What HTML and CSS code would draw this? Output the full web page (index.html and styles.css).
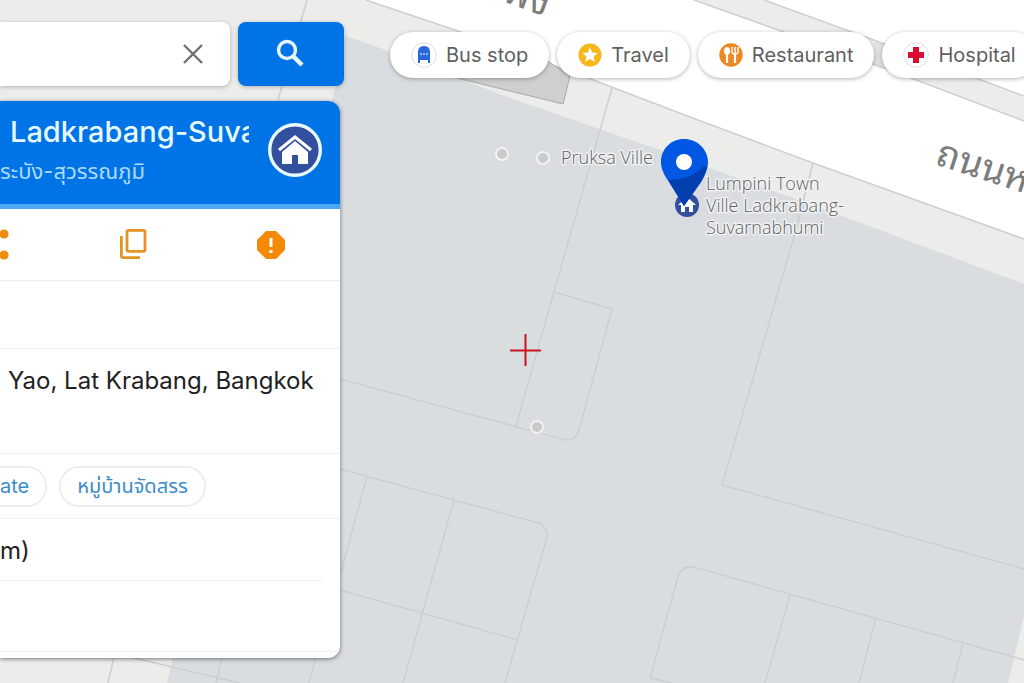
FILE: index.html
```html
<!DOCTYPE html>
<html lang="en">
<head>
    <meta charset="UTF-8">
    <meta name="viewport" content="width=device-width, initial-scale=1.0">
    <title>Map</title>
    <link rel="stylesheet" href="styles.css">
</head>
<body>
    <div class="app">
        <!-- Map canvas -->
        <svg class="map" viewBox="0 0 1024 683" preserveAspectRatio="xMinYMin slice">
            <polygon class="area" points="345,36 380,48 510,98 660,150 845,217 1024,284 1024,616 1008,683 167,683 173,657 333,97"/>
            <polygon class="road" points="366,0 458,31 588,78 690,117 813,163 1024,239 1024,121 882,67 784,32 694,0"/>
            <polygon class="road" points="764,0 882,43 1024,96 1024,0"/>
            <polygon class="strip" points="876,41 887,45 882,69 870,64"/>
            <polyline class="edge" points="366,0 458,31 588,78 690,117 813,163 1024,239"/>
            <polyline class="edge" points="694,0 784,32 882,67 1024,121"/>
            <polyline class="edge" points="764,0 882,43 1024,96"/>
            <polygon class="building" points="457,78 563,104 570,76 540,56 480,45"/>
            <path class="plot" d="M307 0L278 100M612 88L554 292L516 426M554 292L612 309L579 430Q576 441 565 440L340 379M813 163L796 230L722 485L1024 569"/>
            <path class="plot" d="M340 469L542 524L548 534L505 683M367 476L341 572M454 500L403 683M340 590L518 640"/>
            <path class="plot" d="M672 683L650 678L679 573Q684 566 694 567L1024 660M790 595L765 683M876 618L859 683M963 643L953 683"/>
            <path class="plot" d="M114 657L108 683M130 657L240 683M222 657L216 683M316 657L309 683"/>
            <g class="road-name" lang="th">
                <text transform="translate(480 -7) rotate(20)">แพง</text>
                <text transform="translate(934 164) rotate(18)">ถนนห</text>
            </g>
            <g class="dot">
                <circle cx="502" cy="154" r="6"/>
                <circle cx="543" cy="158" r="6"/>
                <circle cx="537" cy="427" r="6"/>
            </g>
            <g class="place">
                <text x="561" y="164">Pruksa Ville</text>
                <text x="706" y="190">Lumpini Town</text>
                <text x="706" y="212">Ville Ladkrabang-</text>
                <text x="706" y="234">Suvarnabhumi</text>
            </g>
            <circle cx="687" cy="205" r="12" fill="#33509f"/>
            <path d="M687 197L678 205H681V212H685V207H689V212H693V205H696Z" fill="#fff"/>
            <path d="M684 139C671 139 661 149 661 162C661 170 665 176 669 182L684 206L701 182C704 177 708 170 708 162C708 149 697 139 684 139Z" fill="#0057e3"/>
            <path d="M668 180Q690 180 704 166L707 167Q704 177 701 182L684 206Z" fill="#003fad"/>
            <circle cx="684" cy="162" r="8" fill="#fff"/>
            <path class="cross" d="M510 350.5H541M525.5 334V366"/>
        </svg>

        <aside class="sidebar">
            <form class="search">
                <div class="search-box">
                    <input type="text" class="search-input" aria-label="Search">
                    <button type="button" class="clear" aria-label="Clear">
                        <svg width="22" height="22" viewBox="0 0 22 22"><path d="M2 2L20 20M20 2L2 20" stroke="#707070" stroke-width="2.4"/></svg>
                    </button>
                </div>
                <button type="submit" class="search-button" aria-label="Search">
                    <svg width="30" height="30" viewBox="0 0 30 30" fill="none" stroke="#e6f7ff"><circle cx="11" cy="11" r="8.5" stroke-width="3.4"/><path d="M17 17L26 26" stroke-width="4.4"/></svg>
                </button>
            </form>

            <section class="panel">
                <header class="panel-head">
                    <div class="names">
                        <h1>Ladkrabang-Suva</h1>
                        <p lang="th">ระบัง-สุวรรณภูมิ</p>
                    </div>
                    <svg class="house" width="54" height="54" viewBox="0 0 54 54">
                        <circle cx="27" cy="27" r="25.3" fill="#33509f" stroke="#e8fbff" stroke-width="3.4"/>
                        <path d="M11 27L27 14L43 27" fill="none" stroke="#fff" stroke-width="3"/>
                        <path d="M14 29L27 18L40 29V41H30V32H24V41H14Z" fill="#fff"/>
                    </svg>
                </header>
                <div class="actions">
                    <button type="button" class="share" aria-label="Share">
                        <svg width="10" height="32" viewBox="0 0 10 32" fill="#f08c0a"><circle cx="4" cy="5" r="4.6"/><circle cx="4" cy="26" r="4.6"/></svg>
                    </button>
                    <button type="button" aria-label="Copy">
                        <svg width="28" height="32" viewBox="0 0 28 32" fill="none" stroke="#e69324" stroke-width="2.8"><rect x="7" y="1.4" width="18" height="21" rx="1.6"/><path d="M1.4 7V27Q1.4 28.6 3 28.6H20"/></svg>
                    </button>
                    <button type="button" aria-label="Report">
                        <svg width="28" height="28" viewBox="0 0 28 28"><path d="M9 0H19L28 9V19L19 28H9L0 19V9Z" fill="#f48a08"/><path d="M14 7V16M14 19V22" stroke="#fff" stroke-width="3"/></svg>
                    </button>
                </div>
                <div class="row blank"></div>
                <div class="row address">Yao, Lat Krabang, Bangkok</div>
                <div class="row tags">
                    <a href="#" class="tag cut">ate</a>
                    <a href="#" class="tag" lang="th">หมู่บ้านจัดสรร</a>
                </div>
                <div class="row distance">m)</div>
                <div class="row last"></div>
            </section>
        </aside>

        <nav class="chips">
            <button type="button" class="chip">
                <svg width="26" height="26" viewBox="0 0 26 26"><circle cx="13" cy="13" r="12.3" fill="#fff" stroke="#dedede"/><path d="M7 21V10Q7 4 13 4Q19 4 19 10V21H17V18H9V21Z" fill="#2867df"/><path d="M9 12H17" stroke="#b9d5ff" stroke-width="1.5" stroke-dasharray="2 1"/></svg>
                Bus stop
            </button>
            <button type="button" class="chip">
                <svg width="24" height="24" viewBox="0 0 24 24"><circle cx="12" cy="12" r="11.5" fill="#f5b719"/><path d="M12 4.5L14.2 9.5L19.6 10L15.5 13.6L16.8 19L12 16.1L7.2 19L8.5 13.6L4.4 10L9.8 9.5Z" fill="#fff"/></svg>
                Travel
            </button>
            <button type="button" class="chip">
                <svg width="24" height="24" viewBox="0 0 24 24"><circle cx="12" cy="12" r="11.7" fill="#ee8820"/><ellipse cx="8" cy="8" rx="3" ry="4" fill="#fff"/><path d="M8 10V20M16 11V20" stroke="#fff" stroke-width="2.2"/><path d="M13 4V9Q13 11 16 11T19 9V4M16 4V11" fill="none" stroke="#fff" stroke-width="1.4"/></svg>
                Restaurant
            </button>
            <button type="button" class="chip">
                <svg width="26" height="26" viewBox="0 0 26 26"><circle cx="13" cy="13" r="12.3" fill="#fff" stroke="#dedede"/><path d="M10 5H16V10H21V16H16V21H10V16H5V10H10Z" fill="#db0c32"/></svg>
                Hospital
            </button>
        </nav>
    </div>
</body>
</html>
```

FILE: styles.css
```css
body {
    margin: 0;
    font-family: Inter, "Noto Sans Thai", "Noto Sans", sans-serif;
    background-color: #ececea;
}

* {
    box-sizing: border-box;
}

button {
    border: none;
    padding: 0;
    background: none;
    font-family: inherit;
    cursor: pointer;
}

svg {
    display: block;
    flex-shrink: 0;
}

.app {
    position: relative;
    display: flex;
    align-items: flex-start;
    gap: 46px;
    min-height: 100vh;
    overflow: hidden;
}

/* Map */
.map {
    position: absolute;
    top: 0;
    left: 0;
    width: 100%;
    height: 100%;
}

.area {
    fill: #d9dde0;
}

.road {
    fill: #fff;
}

.strip {
    fill: #e0e0e0;
}

.edge {
    fill: none;
    stroke: #cfcfcf;
    stroke-width: 1.5;
}

.building {
    fill: #cfcfcf;
    stroke: #a8a8a8;
}

.plot {
    fill: none;
    stroke: #cbcfd1;
    stroke-width: 1.5;
}

.road-name {
    fill: #7c7c7c;
    font-size: 38px;
    font-family: "Noto Sans Thai Looped", Loma, Garuda, Waree, "Noto Sans Thai", sans-serif;
}

.dot {
    fill: #c8cacc;
    stroke: #f3f3f3;
    stroke-width: 2;
}

.place {
    fill: #5f5f63;
    font-family: "Open Sans", "Noto Sans", sans-serif;
    font-size: 18px;
    font-weight: 350;
    paint-order: stroke;
    stroke: #f0f1f2;
    stroke-width: 3;
    stroke-linejoin: round;
}

.cross {
    stroke: #c9141c;
    stroke-width: 2;
}

/* Sidebar */
.sidebar {
    position: relative;
    flex: 0 0 344px;
    min-width: 0;
    padding-top: 22px;
}

.search {
    display: flex;
    gap: 8px;
    margin-bottom: 15px;
}

.search-box {
    flex: 1;
    min-width: 0;
    display: flex;
    align-items: center;
    padding-right: 26px;
    background-color: #fff;
    border-radius: 0 8px 8px 0;
    box-shadow: 0 1px 4px rgba(0, 0, 0, 0.25);
}

.search-input {
    flex: 1;
    min-width: 0;
    border: none;
    outline: none;
    background: none;
    font-size: 20px;
}

.search-button {
    width: 106px;
    height: 64px;
    display: flex;
    justify-content: center;
    align-items: center;
    background-color: #0073e6;
    border-radius: 8px;
    box-shadow: 0 1px 4px rgba(0, 0, 0, 0.25);
}

.panel {
    margin-right: 4px;
    background-color: #fff;
    border-radius: 0 12px 12px 0;
    overflow: hidden;
    box-shadow: 0 1px 4px rgba(0, 0, 0, 0.5);
}

.panel-head {
    display: flex;
    justify-content: space-between;
    height: 108px;
    padding: 12px 18px 0 0;
    background-color: #0073e6;
    border-bottom: 5px solid #4ba8f5;
}

.house {
    margin-top: 10px;
}

.names {
    width: 249px;
    overflow: hidden;
    white-space: nowrap;
}

.names h1 {
    margin: 0;
    padding-left: 10px;
    font-size: 29px;
    line-height: 38px;
    font-weight: 500;
    color: #e6f9ff;
}

.names p {
    margin: 0;
    font-size: 22px;
    line-height: 40px;
    color: #a9dcff;
}

.actions {
    display: flex;
    justify-content: space-between;
    align-items: center;
    height: 72px;
    padding-right: 55px;
    border-bottom: 1px solid #eee;
}

.row {
    border-bottom: 1px solid #f0f0f0;
    color: #222;
    font-size: 24px;
}

.blank {
    height: 68px;
}

.address {
    height: 105px;
    padding: 16px 0 0 8px;
    line-height: 32px;
    white-space: nowrap;
}

.tags {
    display: flex;
    align-items: center;
    gap: 12px;
    height: 65px;
}

.tag {
    height: 41px;
    padding: 0 16px;
    border: 2px solid #eee;
    border-radius: 20px;
    font-size: 20px;
    line-height: 36px;
    color: #3b8ccb;
    text-decoration: none;
    white-space: nowrap;
}

.cut {
    padding-left: 0;
    border-left: none;
    border-radius: 0 20px 20px 0;
}

.distance {
    height: 62px;
    margin-right: 18px;
    line-height: 64px;
}

.last {
    height: 71px;
    margin-bottom: 6px;
}

/* Category buttons */
.chips {
    position: relative;
    display: flex;
    flex: 1;
    min-width: 0;
    gap: 8px;
    padding-top: 32px;
}

.chip {
    flex-shrink: 0;
    display: flex;
    align-items: center;
    gap: 9px;
    height: 46px;
    padding: 0 21px;
    border-radius: 23px;
    background-color: #fff;
    box-shadow: 0 1px 4px rgba(0, 0, 0, 0.3);
    font-size: 20px;
    color: #606060;
    white-space: nowrap;
}
```
